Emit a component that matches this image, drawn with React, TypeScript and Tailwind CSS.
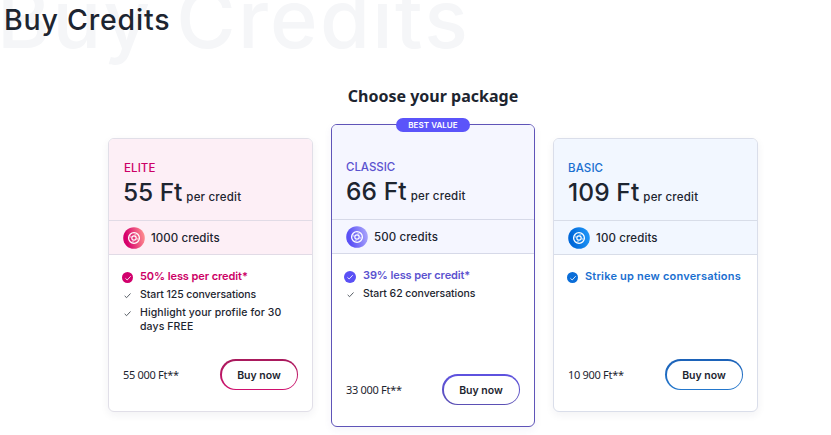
import clsx from 'clsx'

type Feature = {
  text: string
  className?: string
}

type Plan = {
  id: string
  name: string
  price: string
  credits: string
  total: string
  highlight: string
  highlightClass: string
  features: Feature[]
  badge?: string
  from: string
  to: string
  card: string
  line: string
  tint: string
  accent: string
  disc: string
  button: string
  nameClass: string
  priceClass: string
  creditsClass: string
}

const plans: Plan[] = [
  {
    id: 'elite',
    name: 'ELITE',
    price: '55 Ft',
    credits: '1000 credits',
    total: '55 000 Ft**',
    highlight: '50% less per credit*',
    highlightClass: 'tracking-[-0.08px]',
    features: [
      { text: 'Start 125 conversations', className: 'tracking-[-0.08px]' },
      { text: 'Highlight your profile for 30 days FREE', className: 'tracking-[0.1px]' },
    ],
    from: '#d6006c',
    to: '#ff8f8f',
    card: 'h-[274px] border-[#e1dfe8] shadow-[0_3px_8px_rgba(40,40,70,0.06)]',
    line: 'border-[#e1dbe6]',
    tint: 'bg-[#fdeff6]',
    accent: 'text-[#cc0066]',
    disc: 'bg-[#d1006c] size-[11px]',
    button: 'bg-linear-to-b from-[#a81a5c] to-[#d0106e]',
    nameClass: 'tracking-[0.1px]',
    priceClass: 'tracking-[-0.05px]',
    creditsClass: 'tracking-[0.08px]',
  },
  {
    id: 'classic',
    name: 'CLASSIC',
    price: '66 Ft',
    credits: '500 credits',
    total: '33 000 Ft**',
    highlight: '39% less per credit*',
    highlightClass: 'tracking-[-0.1px]',
    features: [{ text: 'Start 62 conversations', className: 'tracking-[-0.06px]' }],
    badge: 'BEST VALUE',
    from: '#5a50f5',
    to: '#a9a4fb',
    card: 'h-[303px] border-[#5f54b8] shadow-[0_3px_8px_rgba(60,50,150,0.06)]',
    line: 'border-[#d6d9e8]',
    tint: 'bg-[#f5f6ff]',
    accent: 'text-[#5b53cf]',
    disc: 'bg-[#5a50f5] size-[12px] -ml-px',
    button: 'bg-linear-to-b from-[#5e52e0] to-[#5b50b4]',
    nameClass: '-ml-px tracking-[-0.05px]',
    priceClass: 'tracking-[0.1px]',
    creditsClass: 'tracking-[0.12px]',
  },
  {
    id: 'basic',
    name: 'BASIC',
    price: '109 Ft',
    credits: '100 credits',
    total: '10 900 Ft**',
    highlight: 'Strike up new conversations',
    highlightClass: 'tracking-[0.2px]',
    features: [],
    from: '#0068d9',
    to: '#1f96f8',
    card: 'h-[274px] border-[#dadeea] shadow-[0_3px_8px_rgba(40,40,70,0.06)]',
    line: 'border-[#d8dde8]',
    tint: 'bg-[#f2f7ff]',
    accent: 'text-[#1a6fd0]',
    disc: 'bg-[#0a6dd8] size-[11px]',
    button: 'bg-linear-to-b from-[#1c62b8] to-[#2377cc]',
    nameClass: '-ml-px tracking-[0.1px]',
    priceClass: 'tracking-[0.1px]',
    creditsClass: 'tracking-[0.12px]',
  },
]

function Coin({ id, from, to }: { id: string; from: string; to: string }) {
  return (
    <svg viewBox="0 0 22 22" className="size-[22px] shrink-0" fill="none">
      <defs>
        <linearGradient id={`coin-${id}`} x1="0" y1="0.6" x2="1" y2="0.4">
          <stop offset="0.15" stopColor={from} />
          <stop offset="1" stopColor={to} />
        </linearGradient>
      </defs>
      <circle cx="11" cy="11" r="10.8" fill={`url(#coin-${id})`} />
      <circle cx="11" cy="11" r="5.4" stroke="#fff" strokeWidth="1.3" />
      <circle cx="11" cy="11" r="3.8" stroke="#fff" strokeOpacity="0.45" strokeWidth="1.6" strokeDasharray="2 3.97" />
      <circle cx="11" cy="11" r="2.2" stroke="#fff" strokeWidth="1.2" />
    </svg>
  )
}

function Check({ className }: { className?: string }) {
  return (
    <svg viewBox="0 0 12 12" className={className} fill="none" stroke="currentColor">
      <path d="M2.9 6.4 5 8.4l4.3-4.6" />
    </svg>
  )
}

function PlanCard({ plan }: { plan: Plan }) {
  return (
    <div className={clsx('relative flex flex-col rounded-md border bg-white', plan.card, plan.badge ? 'w-[204px]' : 'w-[205px]')}>
      {plan.badge && (
        <span className="absolute top-[-7px] left-1/2 flex h-[14px] w-[74px] -translate-x-1/2 items-center justify-center rounded-full bg-[#5b54fa] text-[8px] leading-none font-semibold tracking-[0.05px] whitespace-nowrap text-white">
          {plan.badge}
        </span>
      )}

      {/* Price */}
      <div className={clsx('rounded-t-[5px] border-b px-[14px]', plan.badge ? 'h-[95px] pt-[34px]' : 'h-[82px] pt-[21px]', plan.tint, plan.line)}>
        <div className={clsx('h-4 pl-px text-[11.5px] leading-4 font-medium', plan.accent, plan.nameClass)}>{plan.name}</div>
        <div className="flex h-8 items-baseline gap-1 leading-8 whitespace-nowrap">
          <span className={clsx('text-[24.5px] font-[450]', plan.priceClass)}>{plan.price}</span>
          <span className="text-[11.5px] font-medium tracking-[0.2px]">per credit</span>
        </div>
      </div>

      <div className={clsx('flex h-[34px] items-center gap-[6px] border-b px-[14px]', plan.tint, plan.line)}>
        <Coin id={plan.id} from={plan.from} to={plan.to} />
        <span className={clsx('pt-[2px] text-[11.5px] font-medium', plan.creditsClass)}>{plan.credits}</span>
      </div>

      {/* Features */}
      <ul className="flex flex-1 flex-col gap-1 pt-[14px] pl-[13px]">
        <li className={clsx('mb-px flex h-[14px] items-center gap-[7px] text-[11px] leading-[14px] font-semibold whitespace-nowrap', plan.accent, plan.highlightClass)}>
          <span className={clsx('mt-[3px] flex shrink-0 items-center justify-center rounded-full text-white', plan.disc)}>
            <Check className="size-[10px]" />
          </span>
          {plan.highlight}
        </li>
        {plan.features.map((feature) => (
          <li key={feature.text} className={clsx('flex gap-[7px] text-[10.5px] leading-[14px] font-medium', feature.className)}>
            <Check className="mt-[2px] size-[11px] shrink-0 opacity-80" />
            <span className="w-[146px]">{feature.text}</span>
          </li>
        ))}
      </ul>

      <div className="mb-[21px] flex items-center justify-between px-[14px]">
        <span className="pt-[2px] font-['Noto_Sans'] text-[11px] tracking-[-0.3px] whitespace-nowrap">{plan.total}</span>
        <button className={clsx('h-[31px] w-[78px] rounded-full px-[1.5px] pt-[2px] pb-[1.5px]', plan.button)}>
          <span className="flex h-full items-center justify-center rounded-full bg-white pt-[2px] text-[10.5px] font-semibold whitespace-nowrap">Buy now</span>
        </button>
      </div>
    </div>
  )
}

export default function App() {
  return (
    <main className="relative h-[435px] w-[831px] overflow-hidden bg-white font-['Inter',sans-serif] text-[#1d2530]">
      <div aria-hidden="true" className="absolute top-[-29px] left-[-3px] text-[81px] leading-[96px] font-medium tracking-[2.3px] whitespace-nowrap text-[#f5f6f8]">
        Buy Credits
      </div>
      <h1 className="relative h-[38px] pl-[4px] text-[28.5px] leading-[39px] font-[450] tracking-[0.8px]">Buy Credits</h1>

      <h2 className="mt-[46px] pl-[35px] text-center font-['Noto_Sans'] text-[16px] leading-6 font-bold">Choose your package</h2>

      <div className="mt-4 flex items-start gap-[18px] pl-[108px]">
        {plans.map((plan) => (
          <div key={plan.id} className={plan.badge ? '' : 'pt-[14px]'}>
            <PlanCard plan={plan} />
          </div>
        ))}
      </div>
    </main>
  )
}
